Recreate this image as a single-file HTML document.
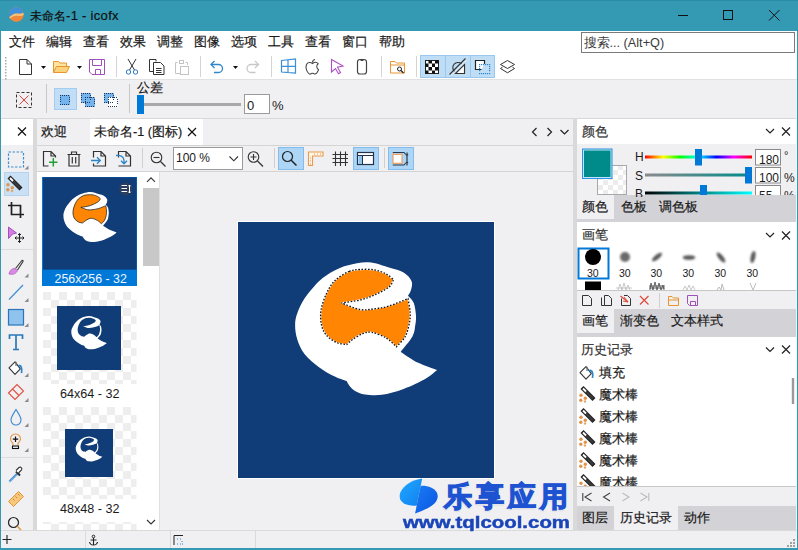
<!DOCTYPE html>
<html><head><meta charset="utf-8">
<style>
*{margin:0;padding:0;box-sizing:border-box}
html,body{width:798px;height:550px;overflow:hidden;background:#f0eff2;font-family:"Liberation Sans",sans-serif;font-size:13px;color:#000}
.a{position:absolute}
.t{position:absolute;white-space:nowrap;line-height:1;font-size:13px;color:#1a1a1a;-webkit-text-stroke:0.2px currentColor}
svg{position:absolute;left:0;top:0;overflow:visible}
</style></head><body>
<!-- ===== backgrounds ===== -->
<div class="a" style="left:0;top:0;width:798px;height:550px;background:#3499b2"></div>
<div class="a" style="left:0;top:0;width:798px;height:1px;background:#2a8ca5"></div>
<div class="a" style="left:1px;top:30.8px;width:796px;height:517.2px;background:#f0eff2"></div>
<div class="a" style="left:1px;top:30.8px;width:796px;height:48.2px;background:#fff"></div>
<div class="a" style="left:1px;top:79px;width:796px;height:1px;background:#e1e1e1"></div>
<div class="a" style="left:1px;top:117.5px;width:796px;height:1px;background:#d8d8d8"></div>
<!-- left strip -->
<div class="a" style="left:1px;top:118.5px;width:32px;height:26px;background:#fff"></div>
<div class="a" style="left:33px;top:118px;width:4px;height:412px;background:#d9d9d9"></div>
<div class="a" style="left:1px;top:249px;width:32px;height:1px;background:#dcdcdc"></div>
<div class="a" style="left:1px;top:457px;width:32px;height:1px;background:#dcdcdc"></div>
<!-- center -->
<div class="a" style="left:90px;top:118.5px;width:113px;height:26.5px;background:#fff"></div>
<div class="a" style="left:37px;top:145px;width:536px;height:1px;background:#d4d4d4"></div>
<div class="a" style="left:37px;top:171px;width:536px;height:1px;background:#d4d4d4"></div>
<div class="a" style="left:37px;top:172px;width:122px;height:358px;background:#fff"></div>
<div class="a" style="left:159px;top:172px;width:1px;height:358px;background:#e0e0e0"></div>
<div class="a" style="left:143px;top:188px;width:16px;height:78px;background:#c8c8c8"></div>
<div class="a" style="left:573px;top:118px;width:4px;height:412px;background:#d9d9d9"></div>
<!-- canvas image -->
<div class="a" style="left:237px;top:221px;width:258px;height:258px;background:#fff"></div>
<div class="a" style="left:238px;top:222px;width:256px;height:256px;background:#103c78"></div>
<!-- right panels -->
<div class="a" style="left:577px;top:118.5px;width:219px;height:25.5px;background:#fff"></div>
<div class="a" style="left:577px;top:195px;width:219px;height:27px;background:#d3d2d6"></div>
<div class="a" style="left:577px;top:195px;width:37px;height:24px;background:#f0eff2"></div>
<div class="a" style="left:577px;top:222px;width:219px;height:68px;background:#fff"></div>
<div class="a" style="left:577px;top:289.5px;width:219px;height:1.5px;background:#c6c6c6"></div>
<div class="a" style="left:577px;top:309px;width:219px;height:28px;background:#d3d2d6"></div>
<div class="a" style="left:577px;top:309px;width:37px;height:24px;background:#f0eff2"></div>
<div class="a" style="left:577px;top:337px;width:219px;height:149px;background:#fff"></div>
<div class="a" style="left:577px;top:486px;width:219px;height:1px;background:#c8c8c8"></div>
<div class="a" style="left:577px;top:506px;width:219px;height:24px;background:#d3d2d6"></div>
<div class="a" style="left:614px;top:506px;width:64px;height:24px;background:#f0eff2"></div>
<div class="a" style="left:796px;top:118px;width:1px;height:430px;background:#f4f4f4"></div>
<!-- status bar -->
<div class="a" style="left:1px;top:530px;width:796px;height:1px;background:#dadada"></div>
<div class="a" style="left:85px;top:531px;width:1px;height:17px;background:#dadada"></div>
<div class="a" style="left:170px;top:531px;width:1px;height:17px;background:#dadada"></div>
<div class="a" style="left:255px;top:531px;width:1px;height:17px;background:#dadada"></div>

<!-- ===== text ===== -->
<div class="t" style="left:30px;top:8.8px;color:#111;font-size:12px">未命名<span style="font-size:13px;letter-spacing:0.3px">-1 - icofx</span></div>
<div class="t" style="left:9px;top:35.2px">文件</div>
<div class="t" style="left:46px;top:35.2px">编辑</div>
<div class="t" style="left:83px;top:35.2px">查看</div>
<div class="t" style="left:120px;top:35.2px">效果</div>
<div class="t" style="left:157px;top:35.2px">调整</div>
<div class="t" style="left:194px;top:35.2px">图像</div>
<div class="t" style="left:231px;top:35.2px">选项</div>
<div class="t" style="left:268px;top:35.2px">工具</div>
<div class="t" style="left:305px;top:35.2px">查看</div>
<div class="t" style="left:342px;top:35.2px">窗口</div>
<div class="t" style="left:379px;top:35.2px">帮助</div>
<div class="a" style="left:581px;top:32px;width:214px;height:21px;border:1px solid #7a7a7a;background:#fff"></div>
<div class="t" style="left:583.5px;top:36.5px;color:#3a3a3a;font-size:12.7px;-webkit-text-stroke:0">搜索... (Alt+Q)</div>

<div class="t" style="left:137px;top:81px">公差</div>
<div class="a" style="left:244px;top:94px;width:26px;height:20px;border:1px solid #9a9a9a;background:#fff"></div>
<div class="t" style="-webkit-text-stroke:0;left:247px;top:99px">0</div>
<div class="t" style="-webkit-text-stroke:0;left:272px;top:99px">%</div>

<div class="t" style="left:41px;top:125px">欢迎</div>
<div class="t" style="left:94px;top:125.5px;font-size:12.6px">未命名-1 (图标)</div>
<div class="a" style="left:173px;top:147px;width:70px;height:23px;border:1px solid #9a9a9a;background:#fff"></div>
<div class="t" style="-webkit-text-stroke:0;left:176px;top:151.5px;font-size:12px">100 %</div>

<div class="t" style="left:582px;top:125px;color:#333">颜色</div>
<div class="t" style="left:582px;top:199.5px">颜色</div>
<div class="t" style="left:621px;top:199.5px">色板</div>
<div class="t" style="left:659px;top:199.5px">调色板</div>
<div class="t" style="left:582px;top:228px;color:#333">画笔</div>
<div class="t" style="left:582px;top:314px">画笔</div>
<div class="t" style="left:620px;top:314px">渐变色</div>
<div class="t" style="left:671px;top:314px">文本样式</div>
<div class="t" style="left:581px;top:343px;color:#333">历史记录</div>
<div class="t" style="left:599px;top:366px">填充</div>
<div class="t" style="left:599px;top:388px">魔术棒</div>
<div class="t" style="left:599px;top:410px">魔术棒</div>
<div class="t" style="left:599px;top:432px">魔术棒</div>
<div class="t" style="left:599px;top:454px">魔术棒</div>
<div class="t" style="left:599px;top:476px;clip-path:inset(0 0 3px 0)">魔术棒</div>
<div class="t" style="left:582px;top:511px">图层</div>
<div class="t" style="left:620px;top:511px">历史记录</div>
<div class="t" style="left:684px;top:511px">动作</div>


<!-- ===== SVG icons ===== -->
<svg width="798" height="550" viewBox="0 0 798 550" fill="none" stroke-width="1">
<!-- title icon -->
<defs>
<clipPath id="tic"><circle cx="16.3" cy="14.7" r="7.3"/></clipPath>
</defs>
<g clip-path="url(#tic)">
<rect x="8" y="6" width="17" height="17" fill="#f0883a"/>
<path d="M8,6 H25 V12 C22,13.5 20,14 17.5,13.5 C14.5,13 12,14.5 8,18.5 Z" fill="#3f90dc"/>
<path d="M8,18.5 C12,14.5 14.5,13 17.5,13.5 C20,14 22,13.5 25,12 V14.5 C22,16 20,16.2 17.5,15.8 C14.5,15.4 12,16.5 8,20.5 Z" fill="#f6c27a"/>
<path d="M13,23 C18,22.5 22,20 25,16 V23 Z" fill="#e8603a" opacity="0.8"/>
</g>
<!-- window controls -->
<path d="M678,15.5 H688" stroke="#111"/>
<rect x="723.5" y="10.5" width="9" height="9" stroke="#111"/>
<path d="M769,10 L779.5,20.5 M779.5,10 L769,20.5" stroke="#111"/>

<!-- toolbar1 grip -->
<g fill="#a8a8a8">
<rect x="5" y="57" width="1.5" height="1.5"/><rect x="5" y="60" width="1.5" height="1.5"/><rect x="5" y="63" width="1.5" height="1.5"/><rect x="5" y="66" width="1.5" height="1.5"/><rect x="5" y="69" width="1.5" height="1.5"/><rect x="5" y="72" width="1.5" height="1.5"/><rect x="5" y="75" width="1.5" height="1.5"/><rect x="5" y="78" width="1.5" height="1.5"/>
</g>
<!-- new doc -->
<path d="M19.5,59.5 H27 L31.5,64 V74.5 H19.5 Z M27,59.5 V64 H31.5" stroke="#333"/>
<path d="M41,66 H46 L43.5,69 Z" fill="#111"/>
<!-- folder -->
<path d="M53.5,72.5 V61.5 H58.5 L60,63 H66.5 V66.5" stroke="#e8952e" fill="#fde3a0"/>
<path d="M53.5,72.5 L56.5,66.5 H69.5 L66.5,72.5 Z" stroke="#e8952e" fill="#fcd27a"/>
<path d="M77,66 H82 L79.5,69 Z" fill="#111"/>
<!-- save -->
<path d="M89.5,59.5 H104.5 V74.5 H92 L89.5,72 Z" stroke="#a050bb"/>
<path d="M92.5,59.5 V65.5 H101.5 V59.5" stroke="#a050bb"/>
<path d="M95.5,74.5 V69.5 H100.5 V74.5" stroke="#a050bb"/>
<path d="M116.5,56 V77" stroke="#d4d4d4"/>
<!-- scissors -->
<path d="M128,59 L134.5,70 M136,59 L129.5,70" stroke="#333"/>
<circle cx="128.5" cy="72" r="2.2" stroke="#2b7bc0"/><circle cx="135.5" cy="72" r="2.2" stroke="#2b7bc0"/>
<!-- copy -->
<path d="M156,61.5 V59.5 H149.5 V71.5 H153" stroke="#333"/>
<path d="M153.5,62.5 H160.5 L164,66 V74.5 H153.5 Z" stroke="#333"/>
<path d="M156,68.5 H161.5 M156,70.5 H161.5 M156,72.5 H161.5" stroke="#333"/>
<!-- paste disabled -->
<path d="M177.5,62.5 H175.5 V73.5 H180 M185.5,62.5 H187.5 V65" stroke="#c4c4c4"/>
<rect x="179.5" y="60.5" width="4" height="3" stroke="#c4c4c4"/>
<rect x="180.5" y="66.5" width="8" height="8" stroke="#c4c4c4"/>
<path d="M200.5,56 V77" stroke="#d4d4d4"/>
<!-- undo -->
<path d="M211,64.5 H218.5 A4,4 0 0 1 218.5,72.5 H214" stroke="#2f86c9" stroke-width="1.3"/>
<path d="M214.5,61 L211,64.5 L214.5,68" stroke="#2f86c9" stroke-width="1.3"/>
<path d="M233,66 H238 L235.5,69 Z" fill="#111"/>
<!-- redo -->
<path d="M258.5,64.5 H251 A4,4 0 0 0 251,72.5 H255.5" stroke="#c8c8c8" stroke-width="1.3"/>
<path d="M255,61 L258.5,64.5 L255,68" stroke="#c8c8c8" stroke-width="1.3"/>
<path d="M271.5,56 V77" stroke="#d4d4d4"/>
<!-- windows -->
<path d="M281.5,60.5 L295.5,59 V73 L281.5,72 Z M288,59.8 V72.5 M281.5,66.3 H295.5" stroke="#3a8fd9" stroke-width="1.2"/>
<!-- apple -->
<path d="M312.5,63.5 C310.5,62 308,62.2 306.8,64 C305.3,66.5 306,70.5 308.3,73 C309.3,74.2 310.5,74.2 311.3,73.6 C312,73.2 313,73.2 313.8,73.6 C314.6,74.2 315.8,74 316.8,72.8 C317.8,71.5 318.5,70 318.5,69.5 C316.5,68.5 316,65 318.2,63.8 C317,62.2 314.6,62 312.5,63.5 Z" stroke="#444" stroke-width="1.1"/>
<path d="M312.5,62.5 C312.5,61 313.5,59.8 315,59.5" stroke="#444" stroke-width="1.1"/>
<!-- cursor -->
<path d="M331.5,59.5 L343,66 L337.5,67.2 L340.5,72.5 L338.5,73.7 L335.5,68.5 L331.5,72 Z" stroke="#b04cc8" stroke-width="1.1"/>
<!-- phone -->
<rect x="357.5" y="59.5" width="9" height="14.5" rx="2.5" stroke="#444" stroke-width="1.2"/>
<path d="M360.5,60.5 H363.5" stroke="#444"/>
<path d="M381.5,56 V77" stroke="#d4d4d4"/>
<!-- folder search -->
<path d="M390.5,73 V61.5 H395 L396.5,63 H404.5 V73 Z M390.5,65 H404.5" stroke="#e8952e"/>
<circle cx="399.5" cy="69" r="2" stroke="#222"/><path d="M401,70.5 L403.5,73" stroke="#222" stroke-width="1.3"/>
<path d="M416.5,56 V77" stroke="#d4d4d4"/>
<!-- highlighted group -->
<rect x="420.5" y="55.5" width="74" height="22" fill="#c0ddf6" stroke="#98c8f0"/>
<path d="M445.5,55.5 V77.5 M470.5,55.5 V77.5" stroke="#98c8f0"/>
<rect x="425.5" y="60.5" width="13" height="13" fill="#fff" stroke="#222"/>
<g fill="#111"><rect x="428.5" y="60.5" width="3.5" height="3"/><rect x="435" y="60.5" width="3.5" height="3"/><rect x="425.5" y="63.5" width="3" height="3.5"/><rect x="432" y="63.5" width="3" height="3.5"/><rect x="428.5" y="67" width="3.5" height="3.5"/><rect x="435" y="67" width="3.5" height="3.5"/><rect x="425.5" y="70.5" width="3" height="3"/><rect x="432" y="70.5" width="3" height="3"/></g>
<path d="M454.5,71.5 A5.2,5.2 0 1 1 461.5,63.8" stroke="#333" stroke-width="1.1"/>
<path d="M464.5,64.5 V73.5 H455.5" stroke="#333" stroke-width="1.1" fill="#fff"/>
<path d="M455.5,73.5 L464.5,64.5 V73.5 Z" fill="#fff" stroke="#333" stroke-width="1.1"/>
<path d="M449.5,74.5 L465.5,58.5" stroke="#333" stroke-width="1.1"/>
<path d="M451,75.5 L466.5,60" stroke="#f4f4f4" stroke-width="0.8"/>
<path d="M481.5,69.5 H475.5 V60.5 H484.5 V64" stroke="#222" stroke-width="1.2" fill="#fff"/>
<g fill="#2f86d0"><rect x="479" y="64" width="1.2" height="1.2"/><rect x="479" y="73" width="1.2" height="1.2"/><rect x="481" y="64" width="1.2" height="1.2"/><rect x="481" y="73" width="1.2" height="1.2"/><rect x="483" y="64" width="1.2" height="1.2"/><rect x="483" y="73" width="1.2" height="1.2"/><rect x="485" y="64" width="1.2" height="1.2"/><rect x="485" y="73" width="1.2" height="1.2"/><rect x="487" y="64" width="1.2" height="1.2"/><rect x="487" y="73" width="1.2" height="1.2"/><rect x="489" y="64" width="1.2" height="1.2"/><rect x="489" y="73" width="1.2" height="1.2"/><rect x="479" y="66" width="1.2" height="1.2"/><rect x="489" y="66" width="1.2" height="1.2"/><rect x="479" y="68" width="1.2" height="1.2"/><rect x="489" y="68" width="1.2" height="1.2"/><rect x="479" y="70" width="1.2" height="1.2"/><rect x="489" y="70" width="1.2" height="1.2"/></g>
<!-- layers -->
<path d="M507.5,60.5 L514.5,64.5 L507.5,68.5 L500.5,64.5 Z" stroke="#333"/>
<path d="M502.5,67.2 L500.5,68.5 L507.5,72.8 L514.5,68.5 L512.5,67.2" stroke="#333"/>

<!-- ===== toolbar 2 ===== -->
<rect x="16.5" y="92.5" width="15" height="15" stroke="#333" stroke-dasharray="3 2"/>
<path d="M19.5,95.5 L28.5,104.5 M28.5,95.5 L19.5,104.5" stroke="#e0443c"/>
<path d="M46.5,84 V113" stroke="#c8c8c8"/>
<rect x="54.5" y="88.5" width="22" height="21" fill="#c2def6" stroke="#a3cdf0"/>
<rect x="60" y="95" width="10" height="10" fill="#74b3ec"/><g fill="#1e3565"><rect x="60" y="95" width="1" height="1"/><rect x="60" y="104" width="1" height="1"/><rect x="62" y="95" width="1" height="1"/><rect x="62" y="104" width="1" height="1"/><rect x="64" y="95" width="1" height="1"/><rect x="64" y="104" width="1" height="1"/><rect x="66" y="95" width="1" height="1"/><rect x="66" y="104" width="1" height="1"/><rect x="68" y="95" width="1" height="1"/><rect x="68" y="104" width="1" height="1"/><rect x="60" y="97" width="1" height="1"/><rect x="69" y="97" width="1" height="1"/><rect x="60" y="99" width="1" height="1"/><rect x="69" y="99" width="1" height="1"/><rect x="60" y="101" width="1" height="1"/><rect x="69" y="101" width="1" height="1"/></g>
<rect x="81" y="93" width="10" height="10" fill="#74b3ec"/><rect x="85" y="97" width="10" height="10" fill="#74b3ec"/><g fill="#1e3565"><rect x="81" y="93" width="1" height="1"/><rect x="81" y="102" width="1" height="1"/><rect x="83" y="93" width="1" height="1"/><rect x="83" y="102" width="1" height="1"/><rect x="85" y="93" width="1" height="1"/><rect x="85" y="102" width="1" height="1"/><rect x="87" y="93" width="1" height="1"/><rect x="87" y="102" width="1" height="1"/><rect x="89" y="93" width="1" height="1"/><rect x="89" y="102" width="1" height="1"/><rect x="81" y="95" width="1" height="1"/><rect x="90" y="95" width="1" height="1"/><rect x="81" y="97" width="1" height="1"/><rect x="90" y="97" width="1" height="1"/><rect x="81" y="99" width="1" height="1"/><rect x="90" y="99" width="1" height="1"/></g><g fill="#1e3565"><rect x="85" y="97" width="1" height="1"/><rect x="85" y="106" width="1" height="1"/><rect x="87" y="97" width="1" height="1"/><rect x="87" y="106" width="1" height="1"/><rect x="89" y="97" width="1" height="1"/><rect x="89" y="106" width="1" height="1"/><rect x="91" y="97" width="1" height="1"/><rect x="91" y="106" width="1" height="1"/><rect x="93" y="97" width="1" height="1"/><rect x="93" y="106" width="1" height="1"/><rect x="85" y="99" width="1" height="1"/><rect x="94" y="99" width="1" height="1"/><rect x="85" y="101" width="1" height="1"/><rect x="94" y="101" width="1" height="1"/><rect x="85" y="103" width="1" height="1"/><rect x="94" y="103" width="1" height="1"/></g>
<rect x="104" y="93" width="10" height="10" fill="#74b3ec"/><rect x="108" y="97" width="10" height="10" fill="#fff"/><g fill="#1e3565"><rect x="104" y="93" width="1" height="1"/><rect x="104" y="102" width="1" height="1"/><rect x="106" y="93" width="1" height="1"/><rect x="106" y="102" width="1" height="1"/><rect x="108" y="93" width="1" height="1"/><rect x="108" y="102" width="1" height="1"/><rect x="110" y="93" width="1" height="1"/><rect x="110" y="102" width="1" height="1"/><rect x="112" y="93" width="1" height="1"/><rect x="112" y="102" width="1" height="1"/><rect x="104" y="95" width="1" height="1"/><rect x="113" y="95" width="1" height="1"/><rect x="104" y="97" width="1" height="1"/><rect x="113" y="97" width="1" height="1"/><rect x="104" y="99" width="1" height="1"/><rect x="113" y="99" width="1" height="1"/></g><g fill="#1e3565"><rect x="108" y="97" width="1" height="1"/><rect x="108" y="106" width="1" height="1"/><rect x="110" y="97" width="1" height="1"/><rect x="110" y="106" width="1" height="1"/><rect x="112" y="97" width="1" height="1"/><rect x="112" y="106" width="1" height="1"/><rect x="114" y="97" width="1" height="1"/><rect x="114" y="106" width="1" height="1"/><rect x="116" y="97" width="1" height="1"/><rect x="116" y="106" width="1" height="1"/><rect x="108" y="99" width="1" height="1"/><rect x="117" y="99" width="1" height="1"/><rect x="108" y="101" width="1" height="1"/><rect x="117" y="101" width="1" height="1"/><rect x="108" y="103" width="1" height="1"/><rect x="117" y="103" width="1" height="1"/></g>
<path d="M129.5,84 V113" stroke="#c8c8c8"/>
<rect x="144" y="103" width="97" height="3" fill="#a9a9a9"/>
<rect x="137" y="95" width="7" height="19" fill="#0078d7"/>
</svg>


<svg width="798" height="550" viewBox="0 0 798 550" fill="none" stroke-width="1">
<!-- ===== left strip ===== -->
<path d="M18,127.5 L26,135.5 M26,127.5 L18,135.5" stroke="#111" stroke-width="1.2"/>
<rect x="8.5" y="152" width="15" height="15" stroke="#3d8fd6" stroke-dasharray="2.5 1.5" stroke-width="1.2"/>
<path d="M24.5,169.5 H28.5 V165.5 Z" fill="#8a8a8a"/>
<rect x="4.5" y="172.5" width="24" height="23" fill="#c9e0f5" stroke="#b3d3ef"/>
<!-- wand -->
<g transform="translate(-573,-210.5)"><use href="#wd"/></g>
<!-- crop -->
<path d="M11.5,202 V214.5 H24 M8,205.5 H20.5 V218" stroke="#222" stroke-width="1.7"/>
<!-- move -->
<path d="M8.5,227 L16.5,233 L12.5,234 L8.5,238.5 Z" fill="#d47ee0" stroke="#a64bc0"/>
<path d="M19.5,233.5 V242.5 M15,238 H24" stroke="#222" stroke-width="1.1"/>
<path d="M18,235 L19.5,233.5 L21,235 M18,241 L19.5,242.5 L21,241 M16.5,236.5 L15,238 L16.5,239.5 M22.5,236.5 L24,238 L22.5,239.5" stroke="#222" stroke-width="1"/>
<!-- brush -->
<path d="M15.5,268.5 L21.5,261 C22.3,260 23.5,260.3 23,261.5 L17.5,270" stroke="#333" stroke-width="1.1"/>
<path d="M9,274 C9.5,271 11.5,268.8 14.5,268.3 L17.5,270.5 C16.5,273.5 13,275 9,274 Z" fill="#d98ae3" stroke="#b05bc5" stroke-width="0.8"/>
<path d="M24.5,277.5 H28.5 V273.5 Z" fill="#8a8a8a"/>
<!-- line -->
<path d="M9,299.5 L23,285" stroke="#3d8fd6" stroke-width="1.2"/>
<path d="M24.5,302 H28.5 V298 Z" fill="#8a8a8a"/>
<!-- rect -->
<rect x="8.5" y="309.5" width="15" height="15.5" fill="#8fc3ee" stroke="#2a75bb" stroke-width="1.2"/>
<path d="M24.5,327 H28.5 V323 Z" fill="#8a8a8a"/>
<!-- T -->
<path d="M9.5,339 V335 H22.5 V339 M16,335 V349.5 M13,349.5 H19" stroke="#2a7ab8" stroke-width="1.7"/>
<!-- bucket -->
<path d="M9,367.8 L15,361.8 L20.3,368.8 L15,374.3 Z" stroke="#333" stroke-width="1.1" fill="#fff" stroke-linejoin="round"/>
<path d="M16,361.8 V366" stroke="#777" stroke-width="1.3"/>
<path d="M18.2,366 C20.5,364.5 22.5,367.5 21.5,373" stroke="#2a85c8" stroke-width="1.8"/>
<path d="M24.5,377 H28.5 V373 Z" fill="#8a8a8a"/>
<!-- eraser -->
<path d="M8.5,393 L17,384.5 L23.5,391 L15,399.5 Z M12.5,389 L19,395.5" stroke="#e05040" stroke-width="1.1"/>
<path d="M24.5,402 H28.5 V398 Z" fill="#8a8a8a"/>
<!-- drop -->
<path d="M16,409.5 C14,413 11,416.5 11,420 A5,5 0 0 0 21,420 C21,416.5 18,413 16,409.5 Z" stroke="#3a88d0" stroke-width="1.1"/>
<path d="M24.5,427 H28.5 V423 Z" fill="#8a8a8a"/>
<!-- bulb -->
<path d="M13,445 V443.5 C11.5,442 10.5,440.5 10.5,439 A5,5 0 0 1 20.5,439 C20.5,440.5 19.5,442 18,443.5 V445" stroke="#e5963e" stroke-width="1.1"/>
<path d="M15.5,436.5 V442 M12.8,439.2 H18.2" stroke="#111" stroke-width="1.2"/>
<rect x="12.5" y="446" width="6" height="2.5" stroke="#111" stroke-width="1.1"/>
<path d="M24.5,452 H28.5 V448 Z" fill="#8a8a8a"/>
<!-- eyedropper -->
<path d="M9.5,481.5 L17.5,473.5" stroke="#3a88d0" stroke-width="2.2"/>
<path d="M9,482.5 L17,474.5" stroke="#9cd0f5" stroke-width="0.8"/>
<path d="M16,471.5 L20,475.5" stroke="#333" stroke-width="2.2"/>
<path d="M18.5,473 L21.5,470 A1.8,1.8 0 0 0 19,467.5 L16,470.5" fill="#fff" stroke="#333" stroke-width="1.1"/>
<!-- ruler -->
<path d="M8.5,501.5 L18.5,491.5 L23.5,496.5 L13.5,506.5 Z" fill="#f8c87a" stroke="#e0973a"/>
<path d="M13,499 L14.5,500.5 M15.5,496.5 L17,498 M18,494 L19.5,495.5" stroke="#b87830" stroke-width="0.8"/>
<!-- zoom -->
<circle cx="13.5" cy="522.5" r="5" stroke="#222" stroke-width="1.2"/>
<path d="M17,526 L21,530" stroke="#e0973a" stroke-width="1.5"/>

<!-- ===== center tabs ===== -->
<path d="M188,128 L196,136 M196,128 L188,136" stroke="#111" stroke-width="1.2"/>
<path d="M536.5,128 L532.5,132 L536.5,136" stroke="#222" stroke-width="1.2"/>
<path d="M547.5,128 L551.5,132 L547.5,136" stroke="#222" stroke-width="1.2"/>
<path d="M560.5,130 L564.5,134 L568.5,130" stroke="#222" stroke-width="1.2"/>
<!-- doc toolbar -->
<path d="M48.5,166 H43.5 V151.5 H51 L55.5,156 V157.5 M51,151.5 V156 H55.5" stroke="#333" stroke-width="1.2"/>
<path d="M53.3,158 V166.5 M49,162.2 H57.5" stroke="#22a03a" stroke-width="1.5"/>
<path d="M67.5,154.5 H80.5 M71.5,154.5 V152 H76.5 V154.5 M69,154.5 V166 H79 V154.5 M72.3,157 V163.5 M75.7,157 V163.5" stroke="#333" stroke-width="1.2"/>
<path d="M93.5,157.5 V151.5 H101 L105.5,156 V166 H93.5 V163.5 M101,151.5 V156 H105.5" stroke="#333" stroke-width="1.2"/>
<path d="M91,160.5 H100 M97,157.2 L100.3,160.5 L97,163.8" stroke="#2a85c8" stroke-width="1.3"/>
<path d="M118.5,157.5 V151.5 H126 L130.5,156 V166 H118.5 M126,151.5 V156 H130.5" stroke="#333" stroke-width="1.2"/>
<path d="M116,155.5 C120.5,155 124,156.5 124,160.5 V163.5 M121,160.8 L124,163.8 L127,160.8" stroke="#2a85c8" stroke-width="1.3"/>
<path d="M142.5,148 V168" stroke="#d0d0d0"/>
<circle cx="156.5" cy="157.5" r="5.3" stroke="#333" stroke-width="1.1"/>
<path d="M153.5,157.5 H159.5" stroke="#333" stroke-width="1.1"/><path d="M160.5,161.5 L165.5,166.5" stroke="#333" stroke-width="1.3"/>
<path d="M229.5,156.5 L233.8,160.8 L238,156.5" stroke="#333" stroke-width="1.1"/>
<circle cx="253.5" cy="157" r="5.3" stroke="#333" stroke-width="1.1"/>
<path d="M250.5,157 H256.5 M253.5,154 V160" stroke="#333" stroke-width="1.1"/><path d="M257.5,161 L263,166.5" stroke="#333" stroke-width="1.3"/>
<path d="M274.5,148 V168" stroke="#d0d0d0"/>
<rect x="278.5" y="147.5" width="25" height="22" fill="#acd5f6" stroke="#84bdeb"/>
<circle cx="287.5" cy="156.5" r="5" stroke="#222" stroke-width="1.2"/><path d="M291.2,160.2 L296.5,165.5" stroke="#222" stroke-width="1.5"/>
<path d="M308.5,165.5 V152 H323 V156 H312.5 V165.5 Z" fill="#fff6ea" stroke="#eb9a48" stroke-width="1.1"/>
<g fill="#eb9a48"><rect x="314" y="153.5" width="1" height="1"/><rect x="317" y="153.5" width="1" height="1"/><rect x="320" y="153.5" width="1" height="1"/><rect x="310" y="157.5" width="1" height="1"/><rect x="310" y="160.5" width="1" height="1"/><rect x="310" y="163.5" width="1" height="1"/></g>
<path d="M335.5,151.5 V166 M340.5,151.5 V166 M345.5,151.5 V166 M332.5,154.5 H348 M332.5,158.5 H348 M332.5,162.5 H348" stroke="#333" stroke-width="1.1"/>
<rect x="353.5" y="147.5" width="25" height="22" fill="#acd5f6" stroke="#84bdeb"/>
<rect x="357.5" y="152.5" width="16" height="12" fill="#fff" stroke="#22344c" stroke-width="1.2"/>
<rect x="358.5" y="156" width="4" height="8" fill="#8cc4f0"/>
<path d="M357.5,155.5 H373.5 M362.5,155.5 V164.5" stroke="#22344c" stroke-width="1"/>
<path d="M384.5,148 V168" stroke="#d0d0d0"/>
<rect x="388.5" y="147.5" width="25" height="22" fill="#acd5f6" stroke="#84bdeb"/>
<rect x="393" y="154.3" width="9" height="9" fill="#fff" stroke="#eea060" stroke-width="1.2"/>
<path d="M392.8,152.5 H404 L405.8,154.5 M392.8,165 H404 L405.8,163" stroke="#2a3a4a" stroke-width="1.1"/>
<path d="M407,152.5 V165.5 M405.8,154.8 H408.2 M405.8,162.5 H408.2" stroke="#2a3a4a" stroke-width="1.2"/>
<!-- thumbnails scrollbar arrows -->
<path d="M147,181.8 L151,177.8 L155,181.8" stroke="#333" stroke-width="1.1"/>
<path d="M147,520 L151,524 L155,520" stroke="#333" stroke-width="1.1"/>

<!-- status bar -->
<path d="M2.5,539.5 H11.5 M7,535 V544" stroke="#222" stroke-width="1.1"/>
<circle cx="93.5" cy="536.5" r="1.3" stroke="#222"/>
<path d="M93.5,538 V545 M90.5,540 H96.5 M89.5,542 C90,544.5 92,545 93.5,545 C95,545 97,544.5 97.5,542" stroke="#222" stroke-width="1.1"/>
<path d="M174,535.5 H183 M174,535.5 V545" stroke="#222"/>
<path d="M177,539 H178 M180,539 H181 M182,541 V542 M177,544 H178 M180,544 H181 M182,544 H183" stroke="#2a85c8"/>
<g fill="#a0a0a0"><rect x="793" y="539" width="2" height="2"/><rect x="790" y="542" width="2" height="2"/><rect x="793" y="542" width="2" height="2"/><rect x="787" y="545" width="2" height="2"/><rect x="790" y="545" width="2" height="2"/><rect x="793" y="545" width="2" height="2"/></g>
</svg>


<svg width="798" height="550" viewBox="0 0 798 550" fill="none" stroke-width="1">
<defs>
<path id="lw" d="M368.5,262.3 C375.3,262.7 383.1,265.8 389.0,267.5 C394.9,269.2 399.8,270.2 403.6,272.5 C407.4,274.8 410.4,278.3 411.6,281.2 C412.8,284.1 411.6,287.6 411.0,290.0 C410.4,292.4 408.5,294.8 408.0,295.7 C409.0,296.9 412.5,299.6 413.8,303.0 C415.1,306.4 415.8,312.3 416.0,316.0 C416.2,319.7 415.9,321.6 415.3,325.0 C414.7,328.4 414.8,332.1 412.4,336.6 C410.0,341.1 402.6,349.3 400.7,351.9 C403.6,353.7 412.1,359.8 418.2,362.8 C424.3,365.8 434.0,368.8 437.1,370.0 C435.2,371.5 431.1,375.6 425.5,378.8 C419.9,382.0 410.9,386.3 403.6,389.0 C396.3,391.7 388.2,393.9 381.8,394.8 C375.4,395.7 369.5,395.1 365.0,394.5 C360.5,393.9 357.6,392.4 355.0,391.0 C352.4,389.6 351.0,387.7 349.6,386.0 C348.2,384.3 347.2,381.8 346.7,381.0 C344.5,380.2 338.2,378.3 333.6,376.0 C329.0,373.7 323.9,370.9 319.0,367.2 C314.1,363.5 308.1,358.6 304.5,354.0 C300.9,349.4 298.9,344.3 297.3,339.5 C295.7,334.7 295.1,329.4 295.1,325.0 C295.1,320.6 295.7,317.6 297.3,313.2 C298.9,308.8 300.9,303.9 304.5,298.6 C308.1,293.3 314.1,285.8 319.0,281.2 C323.9,276.6 328.7,273.7 333.6,271.0 C338.5,268.3 342.4,266.6 348.2,265.2 C354.0,263.8 361.7,261.9 368.5,262.3 Z"/>
<path id="lo" d="M349.0,271.5 C353.2,269.7 355.8,269.8 360.0,269.5 C364.2,269.2 370.1,269.1 374.5,269.8 C378.9,270.6 383.0,272.4 386.2,274.0 C389.4,275.6 392.3,278.8 393.5,279.7 C392.8,280.9 392.2,284.4 389.0,287.0 C385.8,289.6 379.3,292.8 374.5,295.0 C369.7,297.2 365.5,298.7 360.0,300.0 C354.5,301.3 344.7,302.5 341.6,303.0 C344.7,304.1 354.5,308.5 360.0,309.5 C365.5,310.5 369.7,309.4 374.5,308.8 C379.3,308.2 383.4,307.7 389.0,306.0 C394.6,304.3 404.8,299.8 408.0,298.6 C408.4,301.0 410.0,308.6 410.2,313.0 C410.4,317.4 409.9,321.0 409.0,325.0 C408.1,329.0 407.1,333.4 405.0,337.0 C402.9,340.6 397.8,345.2 396.4,346.8 C394.7,345.3 390.3,340.4 386.2,338.0 C382.1,335.6 375.5,333.0 371.6,332.3 C367.7,331.6 365.9,332.5 362.7,333.7 C359.5,334.9 355.2,337.7 352.5,339.5 C349.8,341.3 347.7,343.8 346.7,344.6 C345.0,344.2 339.9,344.1 336.5,342.5 C333.1,340.9 328.9,338.1 326.4,335.2 C323.9,332.3 322.4,329.1 321.5,325.0 C320.6,320.9 320.2,315.6 321.0,310.3 C321.8,305.1 324.2,298.5 326.5,293.5 C328.8,288.5 331.2,284.2 335.0,280.5 C338.8,276.8 344.8,273.3 349.0,271.5 Z"/>
<pattern id="chk" width="16" height="16" patternUnits="userSpaceOnUse" x="43" y="292"><rect width="16" height="16" fill="#fff"/><rect width="8" height="8" fill="#eeeeee"/><rect x="8" y="8" width="8" height="8" fill="#eeeeee"/></pattern>
<pattern id="chk3" width="16" height="16" patternUnits="userSpaceOnUse" x="43" y="407"><rect width="16" height="16" fill="#fff"/><rect width="8" height="8" fill="#eeeeee"/><rect x="8" y="8" width="8" height="8" fill="#eeeeee"/></pattern>
<clipPath id="thc"><rect x="37" y="171" width="105" height="359"/></clipPath>
</defs>
<!-- canvas logo -->
<use href="#lw" fill="#fff"/>
<use href="#lo" fill="#ff8502"/>
<use href="#lo" stroke="#fff" stroke-width="1.3"/>
<use href="#lo" stroke="#111" stroke-width="1.3" stroke-dasharray="1.6 1.6"/>

<g clip-path="url(#thc)">
<!-- thumb 1 -->
<rect x="42" y="177" width="95" height="109" fill="#0078d7"/>
<rect x="43" y="177.3" width="93.5" height="92.3" fill="#103c78"/>
<g transform="translate(42,177) scale(0.375) translate(-238,-222)">
<use href="#lw" fill="#fff"/><use href="#lo" fill="#ff8502"/><use href="#lo" stroke="#222" stroke-width="2"/>
</g>
<circle cx="125.5" cy="189" r="6.5" fill="#2b3f5c"/>
<path d="M121.5,185.5 H127 M121.5,188.5 H127 M121.5,191.5 H127 M129.5,185 V193 M128.3,186.3 L129.5,185 L130.7,186.3 M128.3,191.7 L129.5,193 L130.7,191.7" stroke="#fff" stroke-width="1"/>
<!-- thumb 2 -->
<rect x="43" y="292" width="93.5" height="92" fill="url(#chk)"/>
<rect x="57" y="306" width="64" height="64" fill="#103c78"/>
<g transform="translate(57,306) scale(0.25) translate(-238,-222)">
<use href="#lw" fill="#fff"/><use href="#lo" fill="#103c78"/>
</g>
<!-- thumb 3 -->
<rect x="43" y="407" width="93.5" height="92" fill="url(#chk3)"/>
<rect x="65" y="429" width="48" height="48" fill="#103c78"/>
<g transform="translate(65,429) scale(0.1875) translate(-238,-222)">
<use href="#lw" fill="#fff"/><use href="#lo" fill="#103c78"/>
</g>
<rect x="43" y="522" width="93.5" height="8" fill="url(#chk)"/>
</g>
</svg>
<div class="t" style="left:54.5px;top:273px;color:#eef6ff;font-size:12.4px;-webkit-text-stroke:0">256x256 - 32</div>
<div class="t" style="-webkit-text-stroke:0;left:60px;top:388px;font-size:12.6px">64x64 - 32</div>
<div class="t" style="-webkit-text-stroke:0;left:60px;top:503px;font-size:12.6px">48x48 - 32</div>


<svg width="798" height="550" viewBox="0 0 798 550" fill="none" stroke-width="1">
<defs>
<linearGradient id="hue" x1="0" x2="1"><stop offset="0" stop-color="#f00"/><stop offset="0.17" stop-color="#ff0"/><stop offset="0.33" stop-color="#0f0"/><stop offset="0.5" stop-color="#0ff"/><stop offset="0.67" stop-color="#00f"/><stop offset="0.83" stop-color="#f0f"/><stop offset="1" stop-color="#f00"/></linearGradient>
<linearGradient id="sat" x1="0" x2="1"><stop offset="0" stop-color="#8b8b8b"/><stop offset="1" stop-color="#008b8b"/></linearGradient>
<linearGradient id="bri" x1="0" x2="1"><stop offset="0" stop-color="#000"/><stop offset="1" stop-color="#0ff"/></linearGradient>
<pattern id="chk5" width="10" height="10" patternUnits="userSpaceOnUse" x="598" y="165"><rect width="10" height="10" fill="#fff"/><rect width="5" height="5" fill="#ececec"/><rect x="5" y="5" width="5" height="5" fill="#ececec"/></pattern>
<radialGradient id="soft"><stop offset="0" stop-color="#777"/><stop offset="0.6" stop-color="#888"/><stop offset="1" stop-color="#888" stop-opacity="0"/></radialGradient>
<filter id="bl" x="-50%" y="-50%" width="200%" height="200%"><feGaussianBlur stdDeviation="0.9"/></filter>
<clipPath id="hcl"><rect x="570" y="337" width="226" height="149"/></clipPath>
<clipPath id="cpc"><rect x="577" y="144" width="219" height="51"/></clipPath>
<clipPath id="bpc"><rect x="577" y="246" width="219" height="44"/></clipPath>
</defs>
<!-- panel header icons -->
<path d="M766,129 L770,133 L774,129" stroke="#222" stroke-width="1.2"/>
<path d="M782,127.5 L790,135.5 M790,127.5 L782,135.5" stroke="#222" stroke-width="1.2"/>
<path d="M766,233 L770,237 L774,233" stroke="#222" stroke-width="1.2"/>
<path d="M782,231.5 L790,239.5 M790,231.5 L782,239.5" stroke="#222" stroke-width="1.2"/>
<path d="M766,347.5 L770,351.5 L774,347.5" stroke="#222" stroke-width="1.2"/>
<path d="M782,345.5 L790,353.5 M790,345.5 L782,353.5" stroke="#222" stroke-width="1.2"/>
<!-- color panel -->
<g clip-path="url(#cpc)">
<rect x="597.5" y="165.5" width="29" height="29" fill="url(#chk5)" stroke="#a8a8a8"/>
<rect x="582.5" y="149" width="29.5" height="29.5" fill="#008b8b" stroke="#2a90e8"/>
<rect x="583.5" y="150" width="27.5" height="27.5" stroke="#bfe6ff"/>
<rect x="645" y="155.5" width="107" height="3" fill="url(#hue)"/>
<rect x="645" y="173.5" width="107" height="3" fill="url(#sat)"/>
<rect x="645" y="191.5" width="107" height="3" fill="url(#bri)"/>
<rect x="695" y="149" width="7" height="16.5" fill="#0078d7"/>
<rect x="745" y="167" width="7" height="16.5" fill="#0078d7"/>
<rect x="700" y="185" width="7" height="16.5" fill="#0078d7"/>
<rect x="755.5" y="149.5" width="25" height="15.5" fill="#fff" stroke="#8a8a8a"/>
<rect x="755.5" y="167.5" width="25" height="15.5" fill="#fff" stroke="#8a8a8a"/>
<rect x="755.5" y="185.5" width="25" height="15.5" fill="#fff" stroke="#8a8a8a"/>
</g>
<!-- brushes -->
<rect x="578.5" y="248.5" width="30" height="30" stroke="#0078d7" stroke-width="2"/>
<g clip-path="url(#bpc)">
<circle cx="593" cy="257" r="8" fill="#000"/>
<g filter="url(#bl)">
<circle cx="625" cy="257" r="5" fill="#6a6a6a"/>
<ellipse cx="657" cy="257" rx="6.2" ry="2.3" fill="#5a5a5a" transform="rotate(-40 657 257)"/>
<ellipse cx="689" cy="257.5" rx="6.2" ry="2.3" fill="#5a5a5a"/>
<ellipse cx="721" cy="257.5" rx="6.2" ry="2.3" fill="#5a5a5a" transform="rotate(50 721 257.5)"/>
<ellipse cx="753" cy="257" rx="2.3" ry="6.2" fill="#5a5a5a" transform="rotate(12 753 257)"/>
</g>
<rect x="585" y="281.5" width="16" height="9" fill="#000"/>
<path d="M618,290 L620,284 L622,290 L624,283 L626,290 L628,285 L630,290 M616,288 H632" stroke="#bbb" stroke-width="0.8"/>
<path d="M650,290 L651,283 L653,290 L655,282 L657,290 L659,283 L661,290 L663,285 L664,290 M649,288 H665 M649,286 H665" stroke="#555" stroke-width="0.9"/>
<path d="M683,290 L685,286 L687,290 L689,285 L691,290 L693,286 L695,290" stroke="#bbb" stroke-width="0.8"/>
<path d="M717,290 L719,287 L721,290 L722,284 L724,290" stroke="#bbb" stroke-width="1"/>
<path d="M750,283 L753,290 L756,283" stroke="#aaa" stroke-width="0.8"/>
</g>
<!-- brush toolbar -->
<path d="M582.5,295.5 H588.5 L591.5,298.5 V305.5 H582.5 Z" stroke="#333"/>
<path d="M604.5,295.5 H608.5 L611.5,298.5 V305.5 H604.5 Z M601.5,297.5 V305.5 H604.5" stroke="#333"/>
<path d="M621.5,298.5 V305.5 H630.5 V298.5 L627.5,295.5 H624" stroke="#333"/>
<path d="M620.5,296 L628,302" stroke="#e04a3a" stroke-width="1.3"/><path d="M624,297 L628,302 L623,301" stroke="#e04a3a"/>
<path d="M640,296 L648.5,304.5 M648.5,296 L640,304.5" stroke="#e04a3a" stroke-width="1.2"/>
<path d="M659.5,293 V308" stroke="#cfcfcf"/>
<path d="M668.5,305.5 V296.5 H672 L673.5,298 H678.5 V305.5 Z M668.5,300 H678.5" stroke="#e8952e"/>
<path d="M687.5,295.5 H697.5 V305.5 H689.5 L687.5,303.5 Z M690.5,305.5 V301.5 H695.5 V305.5" stroke="#a050bb"/>
<!-- history icons -->
<g id="hb">
<path d="M580,372.7 L586,366.7 L591.3,373.7 L586,379.2 Z" stroke="#333" stroke-width="1.1" fill="#fff" stroke-linejoin="round"/>
<path d="M587,366.7 V371" stroke="#777" stroke-width="1.3"/>
<path d="M589.2,370.9 C591.5,369.4 593.5,372.4 592.5,377.9" stroke="#2a85c8" stroke-width="1.8"/>
</g>
<g id="wd">
<path d="M583.5,389 L592.5,398" stroke="#222" stroke-width="4.2" stroke-linecap="square"/>
<path d="M583.5,389 L593,398.5" stroke="#3a3a3a" stroke-width="2.2"/>
<path d="M583,388.5 L586,391.5" stroke="#fff" stroke-width="1.8"/>
<circle cx="581" cy="395.3" r="1.7" fill="#e0944c"/><circle cx="585.3" cy="398.3" r="1.7" fill="#e0944c"/><circle cx="580.8" cy="400.3" r="1.7" fill="#e0944c"/><circle cx="585" cy="401.5" r="1.2" fill="#e7a766"/>
</g>
<use href="#wd" y="22"/><use href="#wd" y="44"/><use href="#wd" y="66"/><g clip-path="url(#hcl)"><use href="#wd" y="88"/></g>
<rect x="791.8" y="378" width="2.4" height="26" fill="#9a9a9a"/>
<!-- history nav -->
<path d="M582.8,493 V501 M591.5,493 L585,497 L591.5,501" stroke="#444" stroke-width="1.1"/>
<path d="M610,493 L603.5,497 L610,501" stroke="#444" stroke-width="1.1"/>
<path d="M622.5,493 L629,497 L622.5,501" stroke="#bbb" stroke-width="1.1"/>
<path d="M640.5,493 L647,497 L640.5,501 M648.8,493 V501" stroke="#bbb" stroke-width="1.1"/>
</svg>
<div class="t" style="-webkit-text-stroke:0;left:635px;top:151px;font-size:12px">H</div>
<div class="t" style="-webkit-text-stroke:0;left:635px;top:170px;font-size:12px">S</div>
<div class="t" style="-webkit-text-stroke:0;left:635px;top:188px;font-size:12px;clip-path:inset(0 0 3px 0)">B</div>
<div class="t" style="-webkit-text-stroke:0;left:759px;top:154px;font-size:12px">180</div>
<div class="t" style="-webkit-text-stroke:0;left:759px;top:172px;font-size:12px">100</div>
<div class="t" style="-webkit-text-stroke:0;left:759px;top:190px;font-size:12px;height:5px;overflow:hidden">55</div>
<div class="t" style="-webkit-text-stroke:0;left:784px;top:150px;font-size:11px">°</div>
<div class="t" style="-webkit-text-stroke:0;left:784px;top:172px;font-size:12px">%</div>
<div class="t" style="-webkit-text-stroke:0;left:784px;top:190px;font-size:12px;height:5px;overflow:hidden">%</div>
<div class="t" style="-webkit-text-stroke:0;left:587px;top:268px;font-size:10.5px">30</div>
<div class="t" style="-webkit-text-stroke:0;left:619px;top:268px;font-size:10.5px">30</div>
<div class="t" style="-webkit-text-stroke:0;left:650.5px;top:268px;font-size:10.5px">30</div>
<div class="t" style="-webkit-text-stroke:0;left:682.5px;top:268px;font-size:10.5px">30</div>
<div class="t" style="-webkit-text-stroke:0;left:714.5px;top:268px;font-size:10.5px">30</div>
<div class="t" style="-webkit-text-stroke:0;left:746.5px;top:268px;font-size:10.5px">30</div>


<!-- watermark -->
<svg width="798" height="550" viewBox="0 0 798 550">
<defs>
<linearGradient id="wl1" x1="0" y1="0" x2="1" y2="1"><stop offset="0" stop-color="#22a8ff"/><stop offset="1" stop-color="#1080f0"/></linearGradient>
<linearGradient id="wl2" x1="0" y1="0" x2="1" y2="1"><stop offset="0" stop-color="#1a7cf5"/><stop offset="1" stop-color="#0a55e0"/></linearGradient>
</defs>
<path d="M422.2,478.5 C412,480 404,485 400.5,492 C398.5,497 400,502 405.6,504.2 C409,505.5 413,506 416.7,505.4 Z" fill="url(#wl1)"/>
<path d="M420.6,485.9 C428,485.5 434,488 436.8,492.5 C439,497 437,502 432,505.5 C427,509 421,511.5 415.1,513.4 Z" fill="url(#wl2)"/>
</svg>
<div class="t" style="left:444px;top:482.5px;font-size:28px;font-weight:900;letter-spacing:4px;color:#1f55d6;-webkit-text-stroke:1.3px #1d52d0;text-shadow:1px 1px 1px rgba(255,255,255,.9),0 1px 2px rgba(0,0,60,.3)">乐享应用</div>
<div class="t" style="left:403px;top:514px;font-size:17px;font-weight:bold;color:#1a45b8;-webkit-text-stroke:0.5px #1a45b8;transform:scaleX(1.2);transform-origin:0 0;text-shadow:1px 1px 1px rgba(255,255,255,.9)">www.tqlcool.com</div>

</body></html>
